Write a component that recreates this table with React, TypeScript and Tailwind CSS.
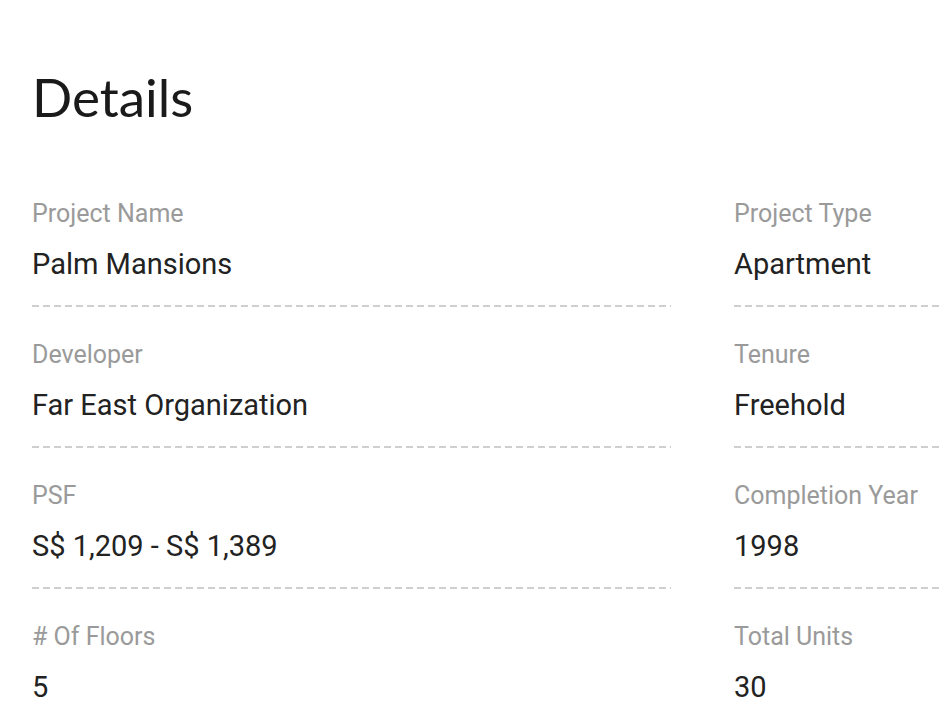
import React from 'react';

const rows = [
  [
    { label: 'Project Name', value: 'Palm Mansions' },
    { label: 'Project Type', value: 'Apartment' },
  ],
  [
    { label: 'Developer', value: 'Far East Organization' },
    { label: 'Tenure', value: 'Freehold' },
  ],
  [
    { label: 'PSF', value: 'S$ 1,209 - S$ 1,389' },
    { label: 'Completion Year', value: '1998' },
  ],
  [
    { label: '# Of Floors', value: '5' },
    { label: 'Total Units', value: '30' },
  ],
];

const DetailItem = ({ label, value, last }: { label: string; value: string; last: boolean }) => (
  <div className="flex flex-col">
    <span className="text-[25px] leading-[37px] text-[#9a9a9a]">{label}</span>
    <span className="mt-[12px] text-[29px] leading-[40px] text-[#222222]">{value}</span>
    {!last && <div className="mt-[21px] mb-[29px] h-[2px] w-full bg-[repeating-linear-gradient(90deg,#cfcfcf_0px,#cfcfcf_7px,transparent_7px,transparent_11px)]" />}
  </div>
);

const App: React.FC = () => {
  return (
    <div className="h-[717px] w-[943px] overflow-hidden bg-white" style={{ fontFamily: 'Roboto, "Liberation Sans", sans-serif' }}>
      <div className="pl-[32px] pt-[65px]">
        <h2
          className="text-[53px] leading-[64px] text-[#1a1a1a]"
          style={{ fontFamily: 'Lato, "Open Sans", sans-serif' }}
        >
          Details
        </h2>
        <div className="mt-[66px] grid w-[1341px] grid-cols-[639px_639px] gap-x-[63px]">
          {rows.map((row, i) =>
            row.map((item) => (
              <DetailItem key={item.label} label={item.label} value={item.value} last={i === rows.length - 1} />
            ))
          )}
        </div>
      </div>
    </div>
  );
};

export default App;
